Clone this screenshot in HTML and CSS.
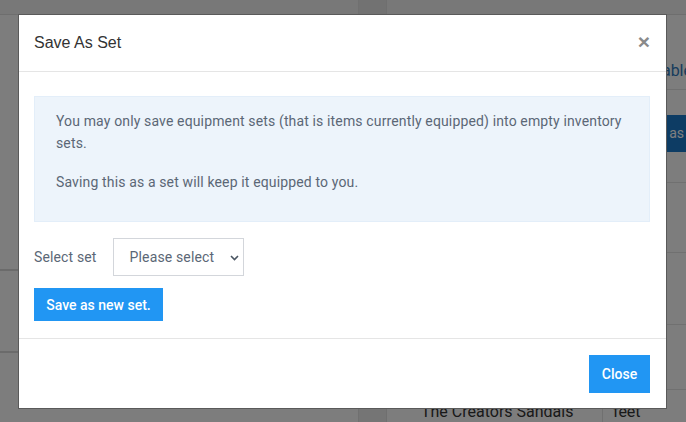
FILE: index.html
```html
<!DOCTYPE html>
<html>
<head>
<meta charset="utf-8">
<link rel="stylesheet" href="styles.css">
</head>
<body>
<div class="page">
  <div class="left">
    <div class="topbar"></div>
    <div class="lrow lrow-a"></div>
    <div class="lrow lrow-b"></div>
  </div>
  <div class="gutter"></div>
  <div class="right">
    <div class="topbar"></div>
    <div class="rrow rrow-link"><span class="link">Available</span></div>
    <div class="rrow rrow-btn"><span class="pbtn">Save as</span></div>
    <div class="rrow rrow-3"></div>
    <div class="rrow rrow-4"></div>
    <div class="rrow rrow-5"></div>
    <div class="trow"><span class="tname">The Creators Sandals</span><span class="tslot">feet</span></div>
  </div>
</div>
<div class="overlay"></div>
<div class="modal">
  <div class="modal-header">
    <h4 class="modal-title">Save As Set</h4>
    <span class="close">&times;</span>
  </div>
  <div class="modal-body">
    <div class="alert">
      <p>You may only save equipment sets (that is items currently equipped) into empty inventory sets.</p>
      <p>Saving this as a set will keep it equipped to you.</p>
    </div>
    <div class="form-row">
      <label class="label">Select set</label>
      <div class="select">Please select
        <svg class="chev" width="9" height="6" viewBox="0 0 9 6"><path d="M1 1l3.5 3.5L8 1" fill="none" stroke="#4a5562" stroke-width="1.6"/></svg>
      </div>
    </div>
    <button class="btn btn-save">Save as new set.</button>
  </div>
  <div class="modal-footer">
    <button class="btn btn-close">Close</button>
  </div>
</div>
</body>
</html>
```

FILE: styles.css
```css
* { box-sizing: border-box; }
html, body { margin: 0; padding: 0; }
body {
  width: 686px;
  height: 422px;
  overflow: hidden;
  font-family: Roboto, "Liberation Sans", sans-serif;
  background: #f7f7f7;
  position: relative;
}
.page {
  display: grid;
  grid-template-columns: 358px 29px 299px;
  height: 422px;
  overflow: hidden;
}
.left { background: #fafafa; display: flex; flex-direction: column; }
.topbar { height: 15px; background: #f1f1f1; border-bottom: 1px solid #dcdcdc; flex: none; }
.left .lrow-a { height: 256px; border-bottom: 2px solid #d6d6d6; flex: none; }
.left .lrow-b { height: 82px; border-bottom: 2px solid #d6d6d6; flex: none; }
.gutter { background: #eaeaea; border-left: 1px solid #e0e0e0; border-right: 1px solid #dedede; }
.gutter::before { content: ""; display: block; height: 15px; background: #e4e4e4; }
.right {
  background: #fbfbfb;
  display: flex;
  flex-direction: column;
  padding-left: 20px;
  overflow: hidden;
}
.right .topbar { margin-left: -20px; }
.rrow { border-bottom: 1px solid #e0e0e0; flex: none; }
.rrow-link {
  height: 75px;
  display: flex;
  align-items: flex-end;
  justify-content: flex-end;
  padding-bottom: 8px;
}
.link { color: #2f77b8; font-size: 16px; line-height: 20px; margin-right: -6px; white-space: nowrap; }
.rrow-btn {
  height: 93px;
  padding-top: 25px;
  display: flex;
  justify-content: flex-end;
  align-items: flex-start;
}
.pbtn {
  background: #1b78c9;
  color: #fff;
  height: 37px;
  font-size: 14px;
  line-height: 37px;
  white-space: nowrap;
  padding: 0 14px;
  margin-right: -12px;
}
.rrow-3 { height: 70px; }
.rrow-4 { height: 72px; }
.rrow-5 { height: 65px; }
.trow { display: flex; font-size: 16px; color: #333; height: 40px; flex: none; }
.tname { width: 196px; padding-left: 14px; padding-top: 12px; border-right: 1px solid #e0e0e0; white-space: nowrap; }
.tslot { padding-left: 10px; padding-top: 12px; }
.overlay {
  position: absolute;
  inset: 0;
  background: rgba(0, 0, 0, 0.5);
}
.modal {
  position: absolute;
  left: 18px;
  top: 14px;
  width: 649px;
  background: #fff;
  border: 1px solid #5a5a5a;
  display: flex;
  flex-direction: column;
}
.modal-header {
  display: flex;
  align-items: center;
  justify-content: space-between;
  padding: 15px 15px 16px 15px;
  border-bottom: 1px solid #e5e5e5;
  height: 57px;
}
.modal-title {
  margin: 0;
  font-family: "Liberation Sans", Arial, sans-serif;
  font-weight: normal;
  font-size: 16px;
  color: #333;
  line-height: 24px;
}
.close {
  font-family: "Liberation Sans", Arial, sans-serif;
  font-weight: bold;
  font-size: 21px;
  line-height: 1;
  color: #8a8a8a;
  margin-top: -3px;
  margin-right: 1px;
}
.modal-body {
  padding: 24px 16px 17px 15px;
  border-bottom: 1px solid #e5e5e5;
}
.alert {
  background: #edf4fb;
  border: 1px solid #e3eef9;
  padding: 13px 21px 15px 21px;
  color: #5b6776;
  font-size: 14px;
  line-height: 22px;
  letter-spacing: 0.14px;
  height: 126px;
}
.alert p { margin: 0 0 17px 0; }
.form-row {
  display: flex;
  align-items: center;
  margin-top: 16px;
  gap: 16px;
}
.label { color: #5b6776; font-size: 14px; letter-spacing: 0.14px; }
.select {
  width: 131px;
  height: 38px;
  border: 1px solid #d3d6db;
  font-size: 14px;
  letter-spacing: 0.14px;
  color: #5b6776;
  display: flex;
  align-items: center;
  padding-left: 16px;
  position: relative;
}
.chev { position: absolute; right: 4px; top: 16px; }
.btn {
  border: 0;
  background: #2196f3;
  color: #fff;
  font-family: Roboto, "Liberation Sans", sans-serif;
  font-weight: 500;
  font-size: 14px;
  cursor: pointer;
}
.btn-save {
  display: block;
  margin-top: 12px;
  width: 129px;
  height: 33px;
  padding: 0;
}
.modal-footer {
  display: flex;
  justify-content: flex-end;
  padding: 16px 16px 15px 16px;
}
.btn-close {
  width: 61px;
  height: 38px;
  padding: 0;
}
```
